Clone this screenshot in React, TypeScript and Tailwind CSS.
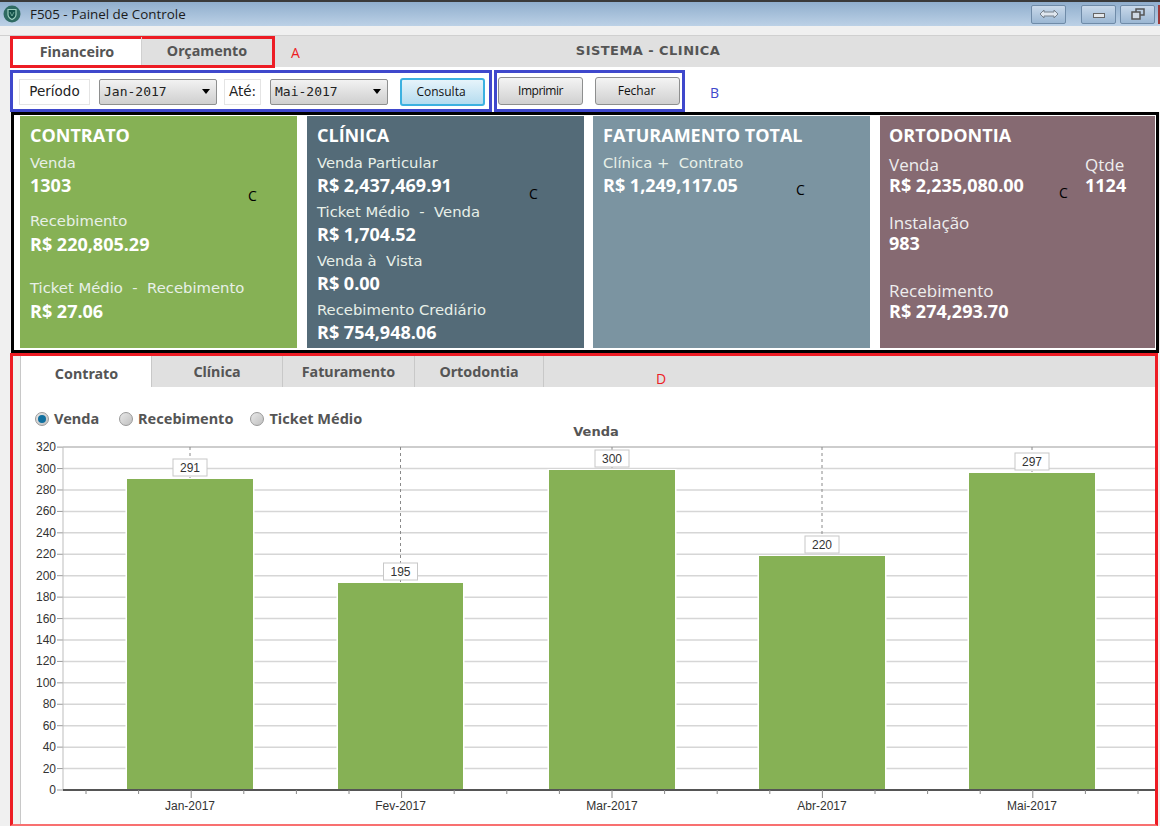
import React from 'react';

const sans = 'font-["Open_Sans",sans-serif]';
const tabText = "font-['Noto_Sans',sans-serif] font-bold text-[14.3px] text-[#555]";

const ticks = [320, 300, 280, 260, 240, 220, 200, 180, 160, 140, 120, 100, 80, 60, 40, 20, 0];
const bars = [
  { label: 'Jan-2017', value: 291, x: 127, w: 126, top: 479 },
  { label: 'Fev-2017', value: 195, x: 338, w: 125, top: 583 },
  { label: 'Mar-2017', value: 300, x: 549, w: 126, top: 470 },
  { label: 'Abr-2017', value: 220, x: 759, w: 126, top: 556 },
  { label: 'Mai-2017', value: 297, x: 969, w: 126, top: 473 },
];

const yOf = (v: number) => 790 - v * 1.0715;

const Chart: React.FC = () => {
  const minor: number[] = [];
  for (let i = 0; i < 21; i++) minor.push(86 + i * 52.6);
  return (
    <svg viewBox="21 423 1134 401" className="block w-[1134px] h-[401px]">
      <text x="596" y="436" textAnchor="middle" fontFamily="'DejaVu Sans', sans-serif" fontWeight="700" fontSize="13" fill="#555">Venda</text>
      {ticks.map((t) => (
        <g key={t}>
          <line x1="63" x2="1155" y1={yOf(t)} y2={yOf(t)} stroke={t === 320 ? '#bdbdbd' : '#d6d6d6'} strokeWidth={t === 0 ? 0 : 1.5} />
          <line x1="57" x2="63" y1={yOf(t)} y2={yOf(t)} stroke="#999" strokeWidth="1" />
          <text x="56" y={yOf(t) + 4} textAnchor="end" fontFamily="'Liberation Sans', sans-serif" fontSize="12" fill="#333">{t}</text>
        </g>
      ))}
      <line x1="63" x2="63" y1="447" y2="790" stroke="#bdbdbd" strokeWidth="1" />
      {bars.map((b) => {
        const cx = b.x + b.w / 2;
        return (
          <g key={b.label}>
            <line x1={cx} x2={cx} y1="447" y2={b.top} stroke="#8a8a8a" strokeWidth="1" strokeDasharray="3 3" />
            <rect x={b.x - 1.5} y={b.top - 1} width={b.w + 3} height={790 - b.top + 1} fill="#fff" />
            <rect x={b.x} y={b.top} width={b.w} height={790 - b.top} fill="#86b155" />
            <rect x={cx - 17} y={b.top - 20} width="34" height="17" fill="#fff" stroke="#c8c8c8" strokeWidth="1" />
            <text x={cx} y={b.top - 7.5} textAnchor="middle" fontFamily="'Liberation Sans', sans-serif" fontSize="12" fill="#333">{b.value}</text>
            <text x={cx} y="810" textAnchor="middle" fontFamily="'Liberation Sans', sans-serif" fontSize="12" fill="#333">{b.label}</text>
          </g>
        );
      })}
      <line x1="63" x2="1155" y1="790" y2="790" stroke="#555" strokeWidth="2" />
      {minor.map((x, i) => (
        <line key={i} x1={x} x2={x} y1="790" y2={(i + 2) % 4 === 0 ? 798 : 794} stroke="#888" strokeWidth="1" />
      ))}
    </svg>
  );
};

const Metric: React.FC<{ label: string; value: string; className?: string; large?: boolean; loose?: boolean }> = ({ label, value, className = '', large, loose }) => (
  <div className={className}>
    <div className={large ? `${sans} pt-[3px] text-[17px] leading-[17px] text-[#eee]` : `font-["DejaVu_Sans",sans-serif] text-[14.8px] leading-[20px] text-[#e8f0e8] ${loose ? 'mb-[1px]' : ''}`}>{label}</div>
    <div className={`${sans} font-bold text-[18px] leading-[24px] text-white`}>{value}</div>
  </div>
);

const Letter: React.FC<{ className: string }> = ({ className }) => (
  <span className={`absolute ${sans} text-[14px] leading-none text-black ${className}`}>C</span>
);

const Combo: React.FC<{ value: string; className?: string }> = ({ value, className = '' }) => (
  <div className={`h-[26px] w-[118px] flex items-center justify-between pl-[4px] pr-[6px] rounded-[2px] border border-[#8e8f8f] bg-gradient-to-b from-[#f2f2f2] to-[#cfcfcf] font-["DejaVu_Sans_Mono",monospace] text-[13px] text-[#222] ${className}`}>
    {value}
    <span className="w-0 h-0 border-x-[4px] border-x-transparent border-t-[5px] border-t-black" />
  </div>
);

const Btn: React.FC<{ label: string; active?: boolean; className?: string }> = ({ label, active, className = '' }) => (
  <button className={`w-[85px] h-[28px] rounded-[3px] border ${sans} text-[12px] text-[#111] ${active ? 'border-2 border-[#3cb1e0] bg-gradient-to-b from-[#e6f4fb] to-[#b5dcef]' : 'border-[#8e8f8f] bg-gradient-to-b from-[#f4f4f4] to-[#d0d0d0]'} ${className}`}>
    {label}
  </button>
);

const WinBtn: React.FC<{ className?: string; children: React.ReactNode }> = ({ className = '', children }) => (
  <div className={`h-[19px] w-[35px] flex items-center justify-center rounded-[2px] border border-[#6f8ba8] bg-gradient-to-b from-[#c9d9ea] to-[#9bb7d3] ${className}`}>{children}</div>
);

const Radio: React.FC<{ label: string; on?: boolean; className?: string }> = ({ label, on, className = '' }) => (
  <div className={`flex items-center gap-[5px] ${className}`}>
    <span className="w-[14px] h-[14px] rounded-full border border-[#999] bg-gradient-to-br from-[#e8e8e8] to-[#c0c0c0] flex items-center justify-center">
      {on && <span className="w-[8px] h-[8px] rounded-full bg-[#11709f]" />}
    </span>
    <span className="font-['Noto_Sans',sans-serif] font-bold text-[14.5px] text-[#555]">{label}</span>
  </div>
);

export default function App() {
  return (
    <div className="w-[1160px] h-[826px] overflow-hidden bg-[#f0f0f0] flex flex-col relative">
      {/* title bar */}
      <div className="h-[26px] shrink-0 border-t-2 border-t-[#3a3a3a] bg-gradient-to-b from-[#90aecd] to-[#bcd1e6] flex items-center">
        <svg width="18" height="18" viewBox="0 0 18 18" className="ml-[3px]">
          <circle cx="9" cy="9" r="8.500" fill="#2f6b62" />
          <path d="M5 4.500 H13 V9.500 C13 12 11 13.500 9 14.500 C7 13.500 5 12 5 9.500 Z" fill="#14524a" stroke="#9fd0c0" strokeWidth="1.200" />
          <path d="M7 7 L9 11 L11 7" fill="none" stroke="#7fb8a6" strokeWidth="0.800" />
        </svg>
        <span className={`ml-[9px] ${sans} text-[13.4px] text-[#1b1b1b]`}>F505 - Painel de Controle</span>
        <div className="ml-auto flex items-center mr-[5px]">
          <WinBtn className="mr-[15px]">
            <svg width="20" height="10" viewBox="0 0 20 10"><path d="M1 5 L5 1 V3 H15 V1 L19 5 L15 9 V7 H5 V9 Z" fill="#dfe6ee" stroke="#77818c" strokeWidth="1" /></svg>
          </WinBtn>
          <WinBtn className="mr-[4px]">
            <div className="w-[12px] h-[5px] mt-[2px] bg-[#e3e7eb] border border-[#666]" />
          </WinBtn>
          <WinBtn>
            <svg width="14" height="12" viewBox="0 0 14 12" fill="none" stroke="#555" strokeWidth="1.500"><rect x="5" y="1" width="8" height="6" /><rect x="1" y="4" width="8" height="7" fill="#cfd9e4" /></svg>
          </WinBtn>
          <div className="w-[2px] h-[19px] ml-[3px] -mr-[5px] bg-[#9c3a3a]" />
        </div>
      </div>
      <div className="h-[10px] shrink-0 border-b border-b-[#d0d0d0]" />

      {/* top tabs */}
      <div className="h-[31px] shrink-0 ml-[10px] bg-[#e0e0e0] flex items-center relative">
        <div className="w-[265px] h-[32px] -mb-[1px] border-[3px] border-[#ed1c24] flex bg-[#e0e0e0]">
          <div className={`w-[128px] bg-white flex items-center justify-center ${tabText}`}>Financeiro</div>
          <div className={`flex-1 flex items-center justify-center ${tabText} -mt-[2px] border-l border-[#d0d0d0]`}>Orçamento</div>
        </div>
        <span className={`ml-[16px] mt-[2px] ${sans} text-[14px] text-[#ed1c24]`}>A</span>
        <span className="ml-[276px] -mt-[2px] font-['DejaVu_Sans',sans-serif] font-bold text-[13px] tracking-[0.45px] text-[#555]">SISTEMA - CLINICA</span>
      </div>

      {/* toolbar */}
      <div className="h-[45px] shrink-0 ml-[10px] bg-white flex items-start pt-[3px]">
        <div className="w-[482px] h-[42px] border-[3px] border-[#3f48cc] flex items-center pl-[6px] pt-[1px]">
          <div className="w-[71px] h-[26px] flex items-center justify-center border border-[#e4e4e4] font-['DejaVu_Sans',sans-serif] text-[13.5px] text-[#222]">Período</div>
          <Combo value="Jan-2017" className="ml-[9px]" />
          <div className="ml-[7px] w-[37px] h-[26px] flex items-center justify-center border border-[#e4e4e4] font-['DejaVu_Sans',sans-serif] text-[13.5px] text-[#222]">Até:</div>
          <Combo value="Mai-2017" className="ml-[9px]" />
          <Btn label="Consulta" active className="ml-[12px] pr-[3px]" />
        </div>
        <div className="w-[191px] h-[42px] ml-[2px] border-[3px] border-[#3f48cc] flex items-center pl-[1px]">
          <Btn label="Imprimir" className="tracking-[-0.5px]" />
          <Btn label="Fechar" className="ml-[12px] pr-[2px]" />
        </div>
        <span className={`ml-[25px] mt-[12px] ${sans} text-[14px] text-[#3f48cc]`}>B</span>
      </div>

      {/* cards */}
      <div className="h-[241px] shrink-0 ml-[11px] w-[1148px] border-[3px] border-black bg-white flex pt-[1px] pl-[6px]">
        <div className="relative w-[277px] h-[232px] bg-[#86b155] pl-[10px] pt-[6px]">
          <div className={`${sans} font-bold text-[18px] leading-[26px] text-white`}>CONTRATO</div>
          <Metric label="Venda" value="1303" className="mt-[5px]" />
          <Metric loose label="Recebimento" value="R$ 220,805.29" className="mt-[14px]" />
          <Metric loose label={'Ticket Médio\u00a0 -\u00a0 Recebimento'} value="R$ 27.06" className="mt-[22px]" />
          <Letter className="left-[228px] top-[73px]" />
        </div>
        <div className="relative w-[277px] h-[232px] ml-[10px] bg-[#546b78] pl-[10px] pt-[6px]">
          <div className={`${sans} font-bold text-[18px] leading-[26px] text-white`}>CLÍNICA</div>
          <Metric label="Venda Particular" value="R$ 2,437,469.91" className="mt-[5px]" />
          <Metric label={'Ticket Médio\u00a0 -\u00a0 Venda'} value="R$ 1,704.52" className="mt-[5px]" />
          <Metric label={'Venda à\u00a0 Vista'} value="R$ 0.00" className="mt-[5px]" />
          <Metric label="Recebimento Crediário" value="R$ 754,948.06" className="mt-[5px]" />
          <Letter className="left-[222px] top-[71px]" />
        </div>
        <div className="relative w-[277px] h-[232px] ml-[9px] bg-[#7b94a1] pl-[10px] pt-[6px]">
          <div className={`${sans} font-bold text-[18px] leading-[26px] text-white`}>FATURAMENTO TOTAL</div>
          <Metric label={'Clínica +\u00a0 Contrato'} value="R$ 1,249,117.05" className="mt-[5px]" />
          <Letter className="left-[203px] top-[67px]" />
        </div>
        <div className="relative w-[275px] h-[232px] ml-[10px] bg-[#866a72] pl-[9px] pt-[6px]">
          <div className={`${sans} font-bold text-[18px] leading-[26px] text-white`}>ORTODONTIA</div>
          <div className="flex mt-[5px]">
            <Metric large label="Venda" value="R$ 2,235,080.00" className="w-[196px]" />
            <Metric large label="Qtde" value="1124" />
          </div>
          <Metric large label="Instalação" value="983" className="mt-[14px]" />
          <Metric large label="Recebimento" value="R$ 274,293.70" className="mt-[24px]" />
          <Letter className="left-[179px] top-[70px]" />
        </div>
      </div>

      {/* chart panel */}
      <div className="flex-1 ml-[10px] w-[1148px] border-x-[3px] border-x-[#ed1c24] border-t-[3px] border-t-[#ed1c24] border-b-2 border-b-[#f87070] flex flex-col relative">
        <div className="h-[32px] shrink-0 bg-[#e0e0e0] flex -mb-[1px]">
          <div className="w-[7px] bg-[#f0f0f0]" />
          <div className={`w-[132px] bg-white border-x border-[#c8c8c8] flex items-center justify-center pt-[3px] pl-[1px] ${tabText}`}>Contrato</div>
          <div className={`w-[131px] border-r border-[#c8c8c8] flex items-center justify-center ${tabText}`}>Clínica</div>
          <div className={`w-[132px] flex items-center justify-center border-r border-[#c8c8c8] ${tabText}`}>Faturamento</div>
          <div className={`w-[129px] flex items-center justify-center border-r border-[#c8c8c8] ${tabText}`}>Ortodontia</div>
          <span className={`ml-[112px] mt-[14px] ${sans} text-[14px] leading-[18px] text-[#ed1c24]`}>D</span>
        </div>
        <div className="flex-1 flex">
          <div className="w-[7px] bg-[#f0f0f0]" />
          <div className="flex-1 bg-white border-l border-[#c8c8c8] relative">
            <div className="flex items-center h-[8px] mt-[28px] pl-[14px]">
              <Radio label="Venda" on />
              <Radio label="Recebimento" className="ml-[20px]" />
              <Radio label="Ticket Médio" className="ml-[17px]" />
            </div>
            <Chart />
          </div>
        </div>
      </div>
    </div>
  );
}
